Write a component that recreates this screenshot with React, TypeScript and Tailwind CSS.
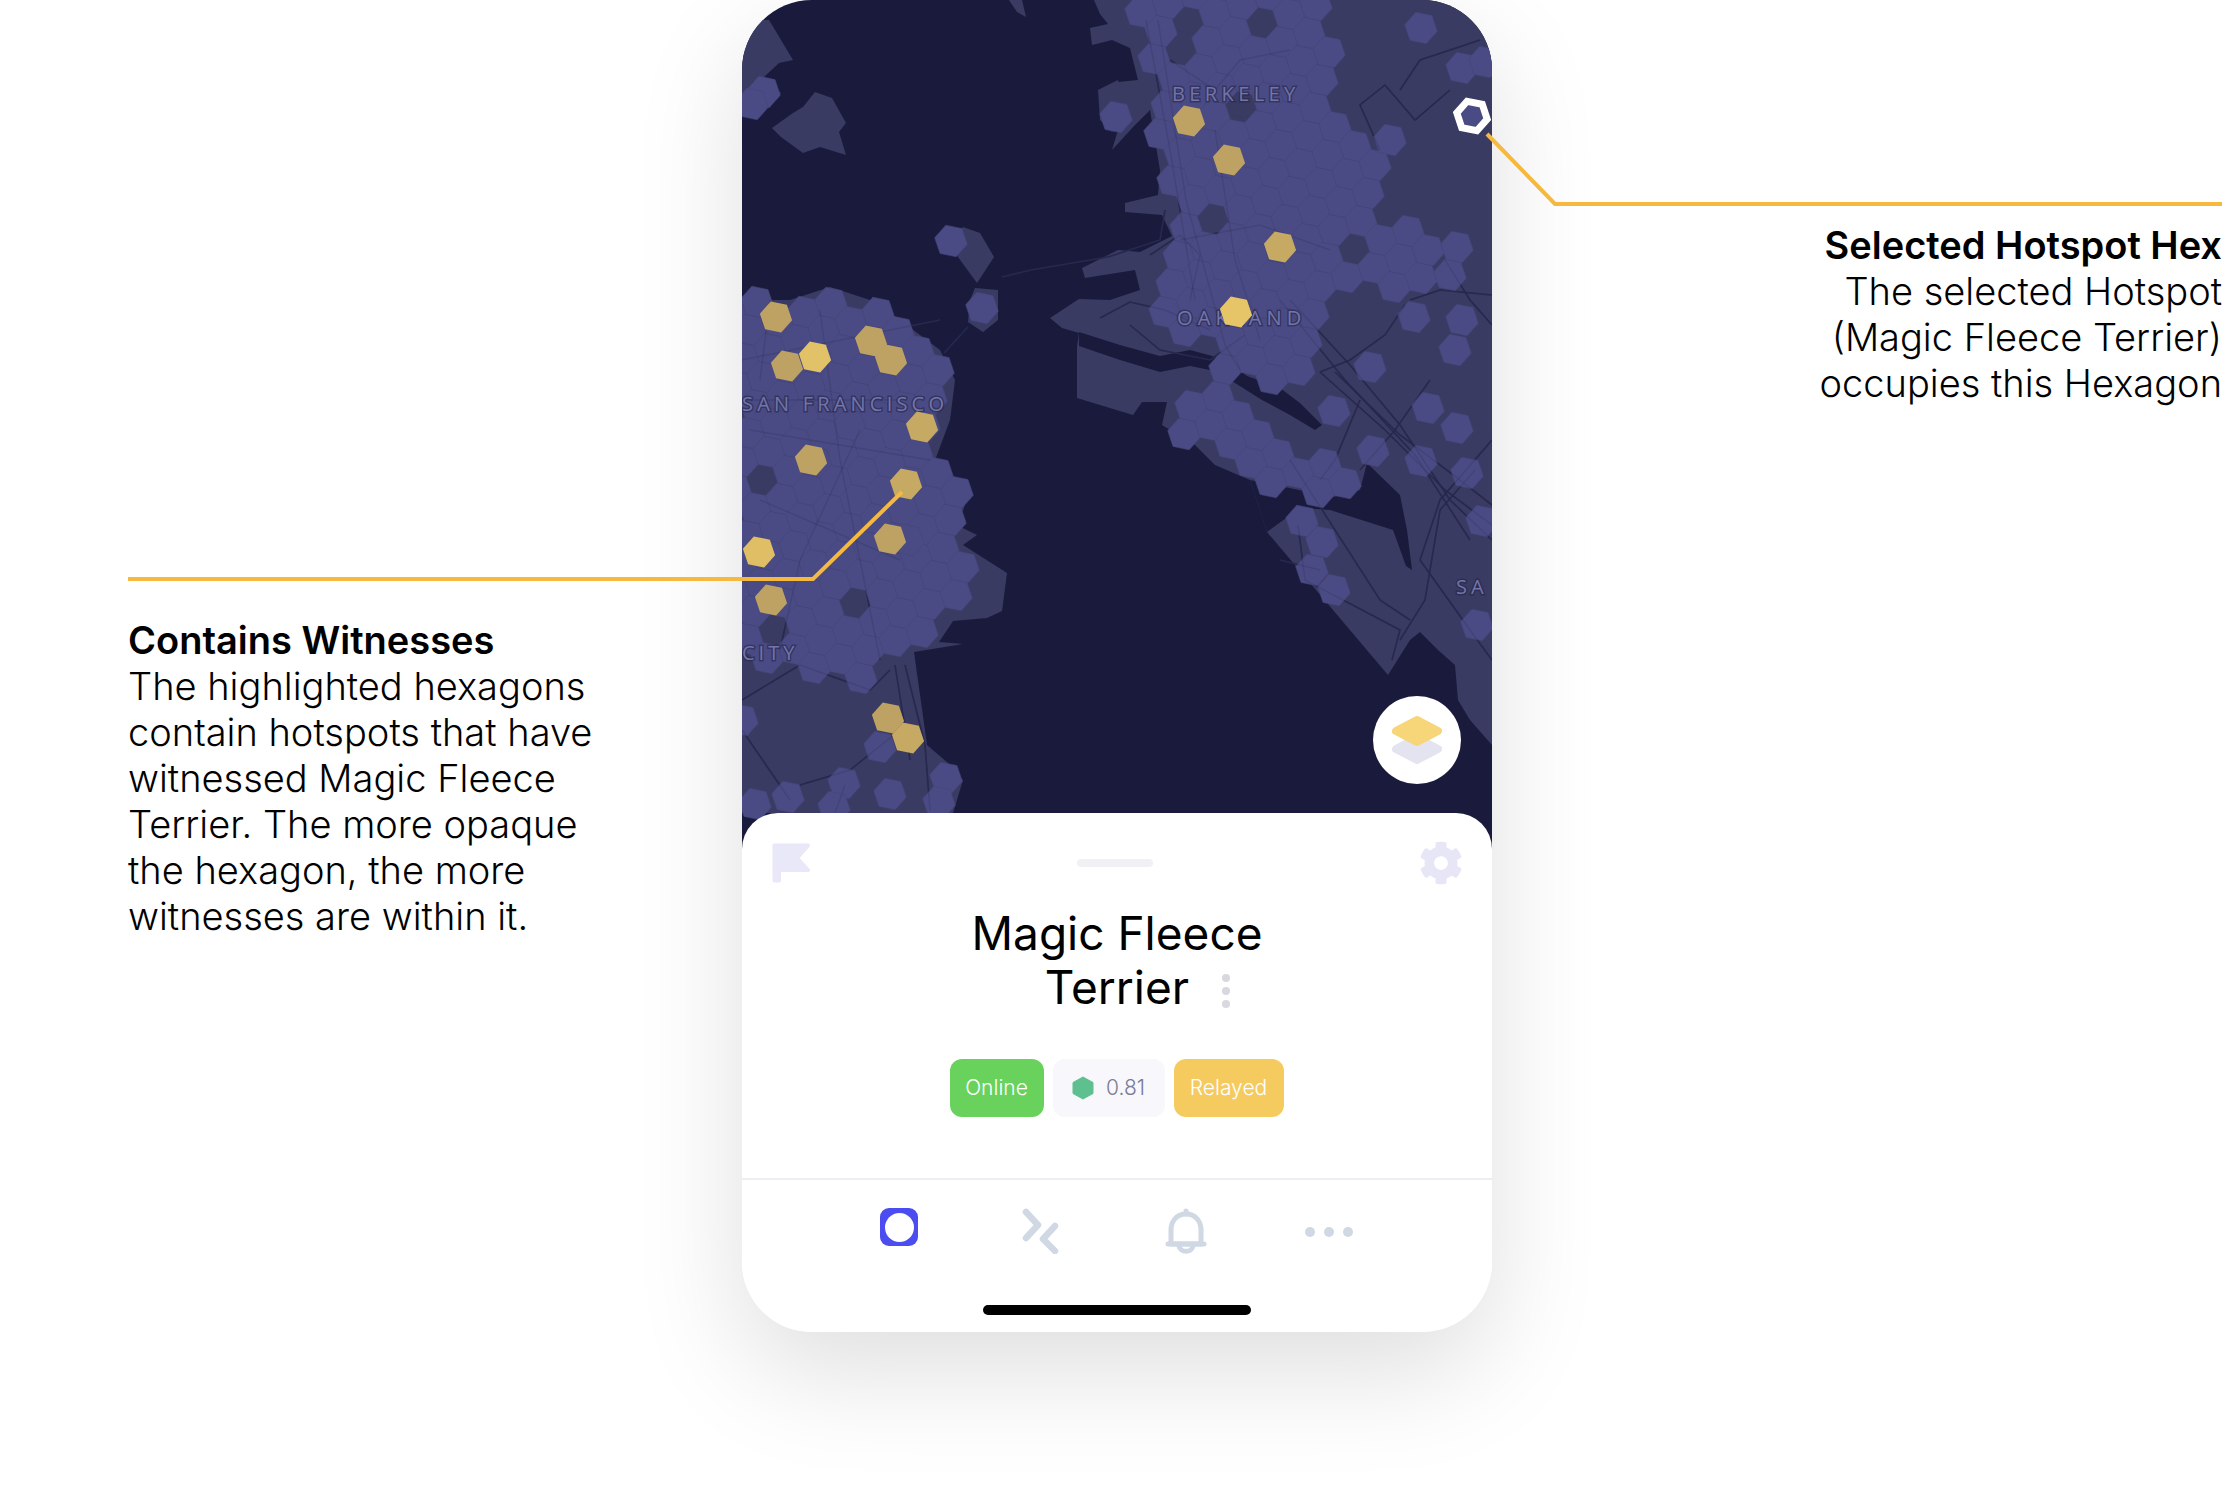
import { FaCog } from "react-icons/fa";

type Pt = [number, number];

// map data is in page pixels, the svg viewBox starts at the phone's left edge
const WATER = "#1a1b3c";
const LAND = "#3a3b62";
const HEX = "#4a4b84";
const ROAD = "#28294f";

const hexPoints = (cx: number, cy: number, r: number) =>
  Array.from({ length: 6 }, (_, i) => {
    const a = ((11.6 + i * 60) * Math.PI) / 180;
    return `${(cx + r * Math.cos(a)).toFixed(1)},${(cy + r * Math.sin(a)).toFixed(1)}`;
  }).join(" ");

const inside = (p: Pt, poly: Pt[]) => {
  let hit = false;
  for (let i = 0, j = poly.length - 1; i < poly.length; j = i++) {
    const [xi, yi] = poly[i];
    const [xj, yj] = poly[j];
    if (yi > p[1] !== yj > p[1] && p[0] < ((xj - xi) * (p[1] - yi)) / (yj - yi) + xi) hit = !hit;
  }
  return hit;
};

const sfZone: Pt[] = [[730, 300], [790, 300], [830, 285], [900, 318], [950, 380], [930, 450], [960, 490], [965, 520], [940, 530], [985, 580], [960, 620], [930, 620], [905, 660], [880, 672], [851, 690], [800, 680], [760, 660], [730, 650]];
const eastZone: Pt[] = [[1130, -20], [1320, -20], [1345, 130], [1420, 215], [1445, 290], [1380, 290], [1330, 290], [1310, 370], [1320, 385], [1230, 385], [1200, 340], [1150, 340], [1160, 260], [1175, 230], [1150, 130], [1150, 60]];
const southEastZone: Pt[] = [[1165, 395], [1220, 380], [1290, 440], [1350, 470], [1340, 500], [1260, 490], [1190, 440], [1170, 430]];

const latticeHexes = (zone: Pt[], ox: number, oy: number) => {
  const out: Pt[] = [];
  for (let m = -30; m < 30; m++) {
    for (let n = -30; n < 30; n++) {
      const p: Pt = [ox + 27 * m + 20 * n, oy - 9 * m + 19 * n];
      if (inside(p, zone)) out.push(p);
    }
  }
  return out;
};

const blueHexes: Pt[] = [
  ...latticeHexes(sfZone, 871, 341),
  ...latticeHexes(eastZone, 1280, 248),
  ...latticeHexes(southEastZone, 1280, 248),
  [764, 92], [752, 104], [951, 241], [1116, 117], [982, 308], [1421, 28], [1462, 68], [1485, 62], [1390, 140], [1457, 247], [1450, 275], [1462, 320], [1455, 350], [1414, 317], [1370, 367], [1334, 411], [1373, 451], [1421, 461], [1467, 473], [1482, 521], [1302, 521], [1322, 542], [1312, 570], [1334, 590], [1477, 625], [1457, 428], [1428, 408], [880, 747], [844, 783], [788, 797], [890, 794], [946, 778], [939, 802], [755, 804], [834, 807], [742, 720], [908, 540],
];

const darkHexes: Pt[] = [[755, 476], [846, 603], [762, 628], [1188, 17], [1271, 23], [1186, 47], [1212, 217], [1244, 103], [1353, 252], [1392, 215]];

const goldHexes: [number, number, string][] = [
  [1189, 121, "#bda263"], [1229, 160, "#bda263"], [1280, 247, "#c6a962"], [1236, 312, "#e6c569"],
  [776, 317, "#bda263"], [787, 366, "#bda263"], [815, 357, "#e2c268"], [871, 341, "#bda263"], [891, 360, "#bda263"],
  [922, 427, "#c6a962"], [811, 460, "#bda263"], [906, 484, "#c6a962"], [759, 552, "#dfbe66"], [890, 539, "#bda263"],
  [771, 600, "#bda263"], [888, 718, "#bda263"], [908, 738, "#c6a962"],
];

const landShapes = [
  "1094,0 1100,14 1108,24 1090,28 1092,45 1112,40 1130,48 1138,80 1118,82 1100,110 1118,130 1112,150 1135,125 1150,110 1160,170 1158,195 1125,203 1125,212 1162,215 1172,236 1140,252 1118,250 1082,268 1085,278 1135,270 1140,290 1110,300 1079,299 1050,318 1062,328 1079,333 1077,347 1077,398 1133,415 1142,402 1167,402 1162,425 1195,445 1215,465 1250,480 1267,532 1388,675 1410,640 1420,632 1438,650 1455,665 1458,700 1470,720 1492,745 1492,0",
  // sf
  "742,300 790,300 830,287 870,300 900,320 940,350 955,380 950,420 934,463 948,487 968,494 963,511 934,514 977,535 963,545 1007,573 1002,611 987,618 953,621 939,642 963,644 914,652 927,745 948,763 963,780 953,813 742,813",
  // top-left land, angel island, treasure island
  "742,20 769,20 793,60 779,63 764,77 781,93 760,110 742,113",
  "815,92 832,98 846,123 839,132 846,155 820,147 803,153 781,137 772,128 793,113 803,107",
  "963,227 980,233 994,257 977,283 958,257 953,237",
  "1009,0 1022,0 1026,17 1017,12",
  "975,288 998,290 998,320 983,332 968,322 970,300",
  "1098,90 1118,80 1125,115 1112,132 1100,120",
];

const waterShapes = [
  "1079,332 1120,345 1160,356 1190,350 1227,360 1247,376 1280,388 1300,403 1322,425 1315,430 1290,415 1262,400 1235,383 1210,370 1190,366 1160,372 1120,360 1079,346",
  "1250,480 1333,497 1360,490 1367,463 1400,495 1407,530 1412,570 1406,566 1393,530 1330,510 1300,508 1267,532",
];

const roads = [
  "M1146,20 L1170,150 L1195,300",
  "M1158,20 L1186,200 L1225,345 L1240,370",
  "M1170,60 L1215,90 L1240,60 L1290,50",
  "M1215,130 L1235,260 L1260,340",
  "M1180,240 L1260,225 L1330,250",
  "M1290,300 L1350,365 L1400,425 L1450,500 L1492,540",
  "M1280,300 L1345,380 L1415,455 L1470,540",
  "M1320,372 L1385,430 L1445,490 L1492,525",
  "M1335,372 L1400,435 L1460,480 L1492,505",
  "M1360,400 L1335,460 L1320,480",
  "M1430,380 L1395,430 L1360,470",
  "M1492,440 L1440,500 L1420,560",
  "M1405,305 L1385,335 L1350,360 L1320,372",
  "M1445,260 L1470,300 L1492,325",
  "M1492,295 L1440,290 L1410,300",
  "M1400,90 L1420,60 L1480,40",
  "M1380,150 L1360,105 L1385,85 L1415,120 L1450,90",
  "M1130,325 L1160,350 L1210,360 L1245,335",
  "M1100,318 L1130,302 L1165,310 L1210,330",
  "M1190,300 L1200,255 L1180,235 L1150,255",
  "M1290,460 L1380,600 L1410,620",
  "M1298,525 L1305,580 L1400,630 L1392,660",
  "M1280,560 L1320,570",
  "M1420,560 L1470,630 L1492,660",
  "M1475,470 L1440,510 L1425,600 L1400,640",
  // sf streets
  "M742,400 L900,400",
  "M770,300 L760,380",
  "M820,310 L840,460 L880,660",
  "M742,360 L940,320",
  "M750,430 L930,460",
  "M760,500 L900,560",
  "M860,430 L800,560 L780,650",
  "M742,700 L800,665 L870,690 L890,670",
  "M742,730 L790,800",
  "M800,785 L850,770 L900,730",
  "M905,665 L925,745 L930,810",
  "M895,665 L910,760",
  "M845,785 L835,813",
  "M968,327 L944,353",
  "M1108,257 L1160,240 L1165,210",
  "M1002,277 L1031,270 L1108,257",
];

const mapLabels: [string, number, number, number][] = [
  ["BERKELEY", 1172, 101, 4.4],
  ["SAN FRANCISCO", 742, 411, 4.2],
  ["OAKLAND", 1177, 325, 5.2],
  ["CITY", 742, 660, 4],
  ["SA", 1456, 594, 4],
];

const BayMap = () => (
  <svg viewBox="742 0 750 850" className="block w-[750px] h-[850px]">
    <rect x="742" y="0" width="750" height="850" fill={WATER} />
    {landShapes.map((pts, i) => (
      <polygon key={i} points={pts} fill={LAND} />
    ))}
    {waterShapes.map((pts, i) => (
      <polygon key={i} points={pts} fill={WATER} />
    ))}
    {roads.map((d, i) => (
      <path key={i} d={d} fill="none" stroke={ROAD} strokeWidth="1.6" />
    ))}
    {darkHexes.map(([x, y], i) => (
      <polygon key={i} points={hexPoints(x, y, 16.4)} fill={LAND} />
    ))}
    {blueHexes
      .filter(([x, y]) => !darkHexes.some(([dx, dy]) => Math.hypot(dx - x, dy - y) < 14))
      .map(([x, y], i) => (
        <polygon key={i} points={hexPoints(x, y, 16.6)} fill={HEX} stroke="#444579" strokeWidth="0.6" />
      ))}
    {/* streets show faintly through the hexes */}
    {roads.map((d, i) => (
      <path key={i} d={d} fill="none" stroke={ROAD} strokeOpacity="0.22" strokeWidth="1.4" />
    ))}
    {mapLabels.map(([label, x, y, spacing]) => (
      <text
        key={label}
        x={x}
        y={y}
        letterSpacing={spacing}
        fill="#7374a8"
        stroke="#222345"
        strokeOpacity="0.55"
        strokeWidth="3"
        paintOrder="stroke"
        className="font-['Open_Sans',sans-serif] text-[20px]"
      >
        {label}
      </text>
    ))}
    {goldHexes.map(([x, y, c], i) => (
      <polygon key={i} points={hexPoints(x, y, 16.4)} fill={c} />
    ))}
    <polygon points={hexPoints(1472, 116, 15.5)} fill={HEX} stroke="#ffffff" strokeWidth="7" />
  </svg>
);

const LayerButton = () => (
  <div className="absolute left-[631px] top-[696px] flex h-[88px] w-[88px] items-center justify-center rounded-full bg-white">
    <svg viewBox="0 0 50 48" className="h-[48px] w-[50px]" strokeWidth="8" strokeLinejoin="round">
      <polygon points="25,22 46,33 25,44 4,33" fill="#e4e4f0" stroke="#e4e4f0" />
      <polygon points="25,4 46,15 25,26 4,15" fill="#f6d679" stroke="#f6d679" />
    </svg>
  </div>
);

const FlagIcon = () => (
  <svg viewBox="0 0 38 40" className="h-[40px] w-[38px]">
    <path d="M2.500 2.500 H36 L25 15 L36 27 H7 V37.500 H2.500 Z" fill="#e8e8f8" stroke="#e8e8f8" strokeWidth="4" strokeLinejoin="round" />
  </svg>
);

const MiniHex = () => (
  <svg viewBox="0 0 22 24" className="h-[24px] w-[22px]">
    <path d="M11 1 L21 6.500 V17.500 L11 23 L1 17.500 V6.500 Z" fill="#5fc08f" stroke="#5fc08f" strokeLinejoin="round" />
  </svg>
);

const TabBar = () => (
  <div className="flex h-[152px] items-start border-t-2 border-[#eeeef2] pl-[138px] pt-[28px]">
    <div className="flex h-[38px] w-[38px] items-center justify-center rounded-[9px] bg-[#4b4df0]">
      <div className="h-[29px] w-[29px] rounded-full bg-white" />
    </div>
    <svg viewBox="0 0 38 46" className="ml-[103px] h-[46px] w-[38px]" fill="none" stroke="#d0d8e4" strokeWidth="6.500" strokeLinecap="round" strokeLinejoin="round">
      <path d="M5 4 L17 17 L5 30" />
      <path d="M34 18 L22 31 L34 43" />
    </svg>
    <svg viewBox="0 0 42 46" className="ml-[106px] h-[46px] w-[42px]" fill="none" stroke="#d0d8e4" strokeWidth="5" strokeLinecap="round" strokeLinejoin="round">
      <path d="M21 6 C11 6 6 14 6 22 V36 H36 V22 C36 14 31 6 21 6 Z" />
      <path d="M3 36 H39" />
      <path d="M21 3 V6" />
      <path d="M14 38 C15 45 27 45 28 38" />
    </svg>
    <div className="ml-[98px] mt-[19px] flex gap-[9px]">
      <div className="h-[10px] w-[10px] rounded-full bg-[#d0d8e4]" />
      <div className="h-[10px] w-[10px] rounded-full bg-[#d0d8e4]" />
      <div className="h-[10px] w-[10px] rounded-full bg-[#d0d8e4]" />
    </div>
  </div>
);

const Sheet = () => (
  <div className="relative -mt-[37px] rounded-t-[36px] bg-white">
    <div className="flex h-[62px] items-start justify-between pl-[30px] pr-[29px] pt-[30px]">
      <FlagIcon />
      <div className="mt-[16px] h-[8px] w-[76px] rounded-full bg-[#f0f0f5]" />
      <FaCog className="-mt-[2px] h-[44px] w-[44px] text-[#e6e6f6]" />
    </div>
    <div className="relative mt-[31px] text-center text-[46px] leading-[54px] text-black">
      <div>Magic Fleece</div>
      <div>Terrier</div>
      <div className="absolute left-[480px] top-[68px] flex flex-col gap-[5px]">
        <div className="h-[8px] w-[8px] rounded-full bg-[#d8d8e0]" />
        <div className="h-[8px] w-[8px] rounded-full bg-[#d8d8e0]" />
        <div className="h-[8px] w-[8px] rounded-full bg-[#d8d8e0]" />
      </div>
    </div>
    <div className="mt-[45px] flex h-[58px] justify-center gap-[9px] pr-[1px] text-[21px] font-light">
      <div className="flex w-[94px] items-center justify-center rounded-[12px] bg-[#69d25c] text-white">Online</div>
      <div className="flex w-[112px] items-center justify-center gap-[12px] rounded-[12px] bg-[#f7f7fc] text-[#7a7c99]">
        <MiniHex />
        <span>0.81</span>
      </div>
      <div className="flex w-[110px] items-center justify-center rounded-[12px] bg-[#f5cb5f] text-white">Relayed</div>
    </div>
    <div className="mt-[61px]">
      <TabBar />
    </div>
    <div className="absolute bottom-[15px] left-[241px] h-[10px] w-[268px] rounded-full bg-black" />
  </div>
);

const Callout = ({ title, lines, className }: { title: string; lines: string[]; className: string }) => (
  <div className={`text-[38px] leading-[46px] text-black ${className}`}>
    <div className="font-semibold">{title}</div>
    {lines.map((line) => (
      <div key={line} className="font-light">
        {line}
      </div>
    ))}
  </div>
);

export default function App() {
  return (
    <div className="relative flex h-[1496px] w-[2238px] overflow-hidden bg-white font-['Inter',sans-serif]">
      <div className="w-[742px] shrink-0 pl-[128px] pt-[617px]">
        <Callout
          title="Contains Witnesses"
          lines={["The highlighted hexagons", "contain hotspots that have", "witnessed Magic Fleece", "Terrier. The more opaque", "the hexagon, the more", "witnesses are within it."]}
          className="whitespace-nowrap"
        />
      </div>

      <div className="h-[1332px] w-[750px] shrink-0 overflow-hidden rounded-[70px] bg-white shadow-[0_40px_110px_rgba(0,0,0,0.13)]">
        <div className="relative">
          <BayMap />
          <LayerButton />
        </div>
        <Sheet />
      </div>

      <div className="flex-1 pr-[16px] pt-[222px]">
        <Callout
          title="Selected Hotspot Hex"
          lines={["The selected Hotspot", "(Magic Fleece Terrier)", "occupies this Hexagon"]}
          className="whitespace-nowrap text-right"
        />
      </div>

      {/* callout leader lines sit over the map */}
      <svg viewBox="0 0 2238 1496" className="pointer-events-none absolute left-0 top-0 h-[1496px] w-[2238px]" fill="none" stroke="#f5b93f" strokeWidth="4">
        <path d="M128 579 H813 L902 492" />
        <path d="M1487 134 L1555 204 H2222" />
      </svg>
    </div>
  );
}
